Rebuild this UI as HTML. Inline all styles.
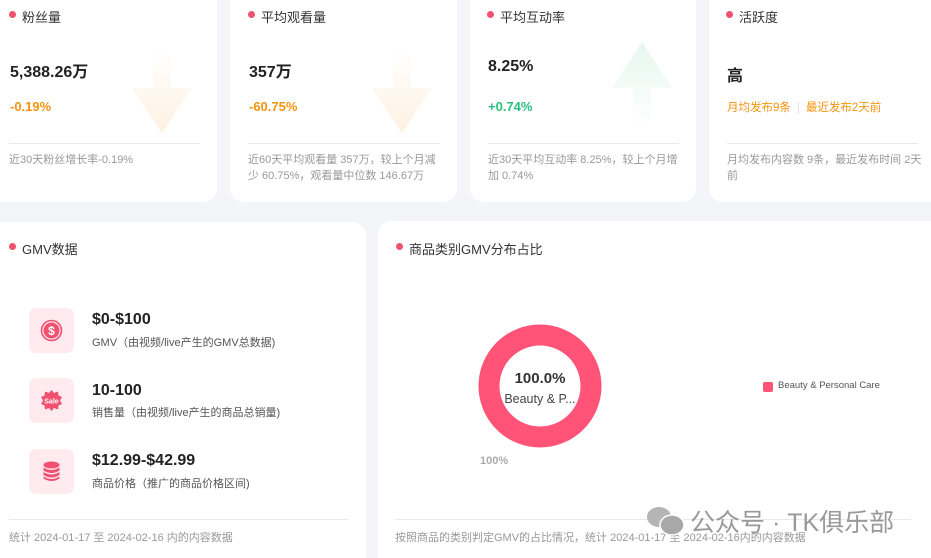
<!DOCTYPE html>
<html><head><meta charset="utf-8"><style>
*{margin:0;padding:0;box-sizing:border-box}
html,body{width:931px;height:558px;overflow:hidden}
body{background:#f4f5f9;font-family:"Liberation Sans","Noto Sans CJK SC",sans-serif;position:relative;color:#333}
.card{position:absolute;background:#fff;border-radius:14px}
.t{position:absolute;font-size:13px;color:#333}
.t:before{content:"";position:absolute;left:-13px;top:4px;width:7px;height:7px;border-radius:50%;background:#f2506f}
.v{position:absolute;font-size:16px;font-weight:bold;color:#222}
.c{position:absolute;font-size:13px;font-weight:bold}
.hr{position:absolute;height:1px;background:#e8e8ec}
.d{position:absolute;font-size:11px;color:#999;line-height:16px}
.ib{position:absolute;left:29px;width:45px;height:45px;border-radius:7px;background:#feeaef}
.iv{position:absolute;left:92px;font-size:16px;font-weight:bold;color:#222}
.is{position:absolute;left:92px;font-size:11px;color:#555}
</style></head><body>
<div class="card" style="left:-20px;top:-20px;width:237px;height:222px"></div>
<div class="card" style="left:230px;top:-20px;width:227px;height:222px"></div>
<div class="card" style="left:470px;top:-20px;width:226px;height:222px"></div>
<div class="card" style="left:709px;top:-20px;width:240px;height:222px"></div>

<svg style="position:absolute;left:131px;top:50px" width="62" height="85"><defs><linearGradient id="g1" x1="0" y1="0" x2="0" y2="1"><stop offset="0" stop-color="#fff" /><stop offset="1" stop-color="#fef1e2"/></linearGradient></defs><path d="M22 0H40V38H61L31 83L1 38H22Z" fill="url(#g1)"/></svg>
<svg style="position:absolute;left:371px;top:50px" width="62" height="85"><path d="M22 0H40V38H61L31 83L1 38H22Z" fill="url(#g1)"/></svg>
<svg style="position:absolute;left:611px;top:42px" width="62" height="85"><defs><linearGradient id="g2" x1="0" y1="0" x2="0" y2="1"><stop offset="0" stop-color="#e6f7ef"/><stop offset="1" stop-color="#fff"/></linearGradient></defs><path d="M31 0L61 46H40V84H22V46H1Z" fill="url(#g2)"/></svg>

<div class="t" style="left:22px;top:7px">粉丝量</div>
<div class="v" style="left:10px;top:58px">5,388.26万</div>
<div class="c" style="left:10px;top:99px;color:#f7930e">-0.19%</div>
<div class="hr" style="left:9px;top:143px;width:191px"></div>
<div class="d" style="left:9px;top:152px">近30天粉丝增长率-0.19%</div>

<div class="t" style="left:261px;top:7px">平均观看量</div>
<div class="v" style="left:249px;top:58px">357万</div>
<div class="c" style="left:249px;top:99px;color:#f7930e">-60.75%</div>
<div class="hr" style="left:248px;top:143px;width:192px"></div>
<div class="d" style="left:248px;top:152px;width:196px">近60天平均观看量 357万，较上个月减少 60.75%，观看量中位数 146.67万</div>

<div class="t" style="left:500px;top:7px">平均互动率</div>
<div class="v" style="left:488px;top:58px">8.25%</div>
<div class="c" style="left:488px;top:99px;color:#2ac07c">+0.74%</div>
<div class="hr" style="left:488px;top:143px;width:191px"></div>
<div class="d" style="left:488px;top:152px;width:196px">近30天平均互动率 8.25%，较上个月增加 0.74%</div>

<div class="t" style="left:739px;top:7px">活跃度</div>
<div class="v" style="left:727px;top:62px">高</div>
<div style="position:absolute;left:727px;top:99px;font-size:11.5px;color:#f7930e">月均发布9条<span style="color:#ddd;margin:0 6px">|</span>最近发布2天前</div>
<div class="hr" style="left:727px;top:143px;width:191px"></div>
<div class="d" style="left:727px;top:152px;width:196px">月均发布内容数 9条，最近发布时间 2天前</div>

<div class="card" style="left:-20px;top:222px;width:386px;height:360px"></div>
<div class="card" style="left:378px;top:221px;width:580px;height:360px"></div>

<div class="t" style="left:22px;top:239px">GMV数据</div>
<div class="ib" style="top:308px"><svg width="45" height="45"><circle cx="22.5" cy="22.5" r="10" fill="none" stroke="#f2506f" stroke-width="1.6"/><circle cx="22.5" cy="22.5" r="8" fill="#f2506f"/><text x="22.5" y="27" text-anchor="middle" font-size="12" font-weight="bold" fill="#fff" font-family="Liberation Sans">$</text></svg></div>
<div class="iv" style="top:311px">$0-$100</div>
<div class="is" style="top:334px">GMV（由视频/live产生的GMV总数据)</div>
<div class="ib" style="top:378px"><svg width="45" height="45"><polygon points="22.5,12 25,15 29,13.5 29.5,17.5 33,19 31,22.5 33,26 29.5,27.5 29,31.5 25,30 22.5,33 20,30 16,31.5 15.5,27.5 12,26 14,22.5 12,19 15.5,17.5 16,13.5 20,15" fill="#f2506f"/><text x="22.5" y="25.5" text-anchor="middle" font-size="7" font-weight="bold" fill="#fff" font-family="Liberation Sans">Sale</text></svg></div>
<div class="iv" style="top:382px">10-100</div>
<div class="is" style="top:404px">销售量（由视频/live产生的商品总销量)</div>
<div class="ib" style="top:449px"><svg width="45" height="45"><ellipse cx="22.5" cy="16" rx="8" ry="3.5" fill="#f2506f"/><path d="M14.5 18.5q8 5 16 0v3q-8 5-16 0z M14.5 23q8 5 16 0v3q-8 5-16 0z M14.5 27.5q8 5 16 0v2q-8 5-16 0z" fill="#f2506f"/></svg></div>
<div class="iv" style="top:452px">$12.99-$42.99</div>
<div class="is" style="top:475px">商品价格（推广的商品价格区间)</div>
<div class="hr" style="left:9px;top:519px;width:339px"></div>
<div class="d" style="left:9px;top:530px">统计 2024-01-17 至 2024-02-16 内的内容数据</div>

<div class="t" style="left:409px;top:239px">商品类别GMV分布占比</div>
<svg style="position:absolute;left:470px;top:310px" width="160" height="160"><circle cx="70" cy="76" r="51" fill="none" stroke="#ff5377" stroke-width="21"/><text x="70" y="73" text-anchor="middle" font-size="15" font-weight="bold" fill="#333" font-family="Liberation Sans">100.0%</text><text x="70" y="93" text-anchor="middle" font-size="12.5" fill="#444" font-family="Liberation Sans">Beauty &amp; P...</text><path d="M71 128v6H53" fill="none" stroke="#ff5377" stroke-width="1.2"/><text x="10" y="154" font-size="11" font-weight="bold" fill="#aaa" font-family="Liberation Sans">100%</text></svg>
<div style="position:absolute;left:763px;top:382px;width:10px;height:10px;border-radius:2px;background:#ff5377"></div>
<div style="position:absolute;left:778px;top:380px;font-size:9.5px;color:#555">Beauty &amp; Personal Care</div>
<div class="hr" style="left:395px;top:519px;width:516px"></div>
<div class="d" style="left:395px;top:530px">按照商品的类别判定GMV的占比情况，统计 2024-01-17 至 2024-02-16内的内容数据</div>
<div style="position:absolute;left:645px;top:505px;width:44px;height:32px"><svg width="44" height="32"><ellipse cx="14" cy="12" rx="12" ry="10" fill="#b5b5b5"/><ellipse cx="27" cy="20" rx="12" ry="10" fill="#a8a8a8" stroke="#fff" stroke-width="1.5"/></svg></div>
<div style="position:absolute;left:690px;top:503px;font-size:25px;color:#999;white-space:nowrap">公众号 · TK俱乐部</div>
</body></html>
